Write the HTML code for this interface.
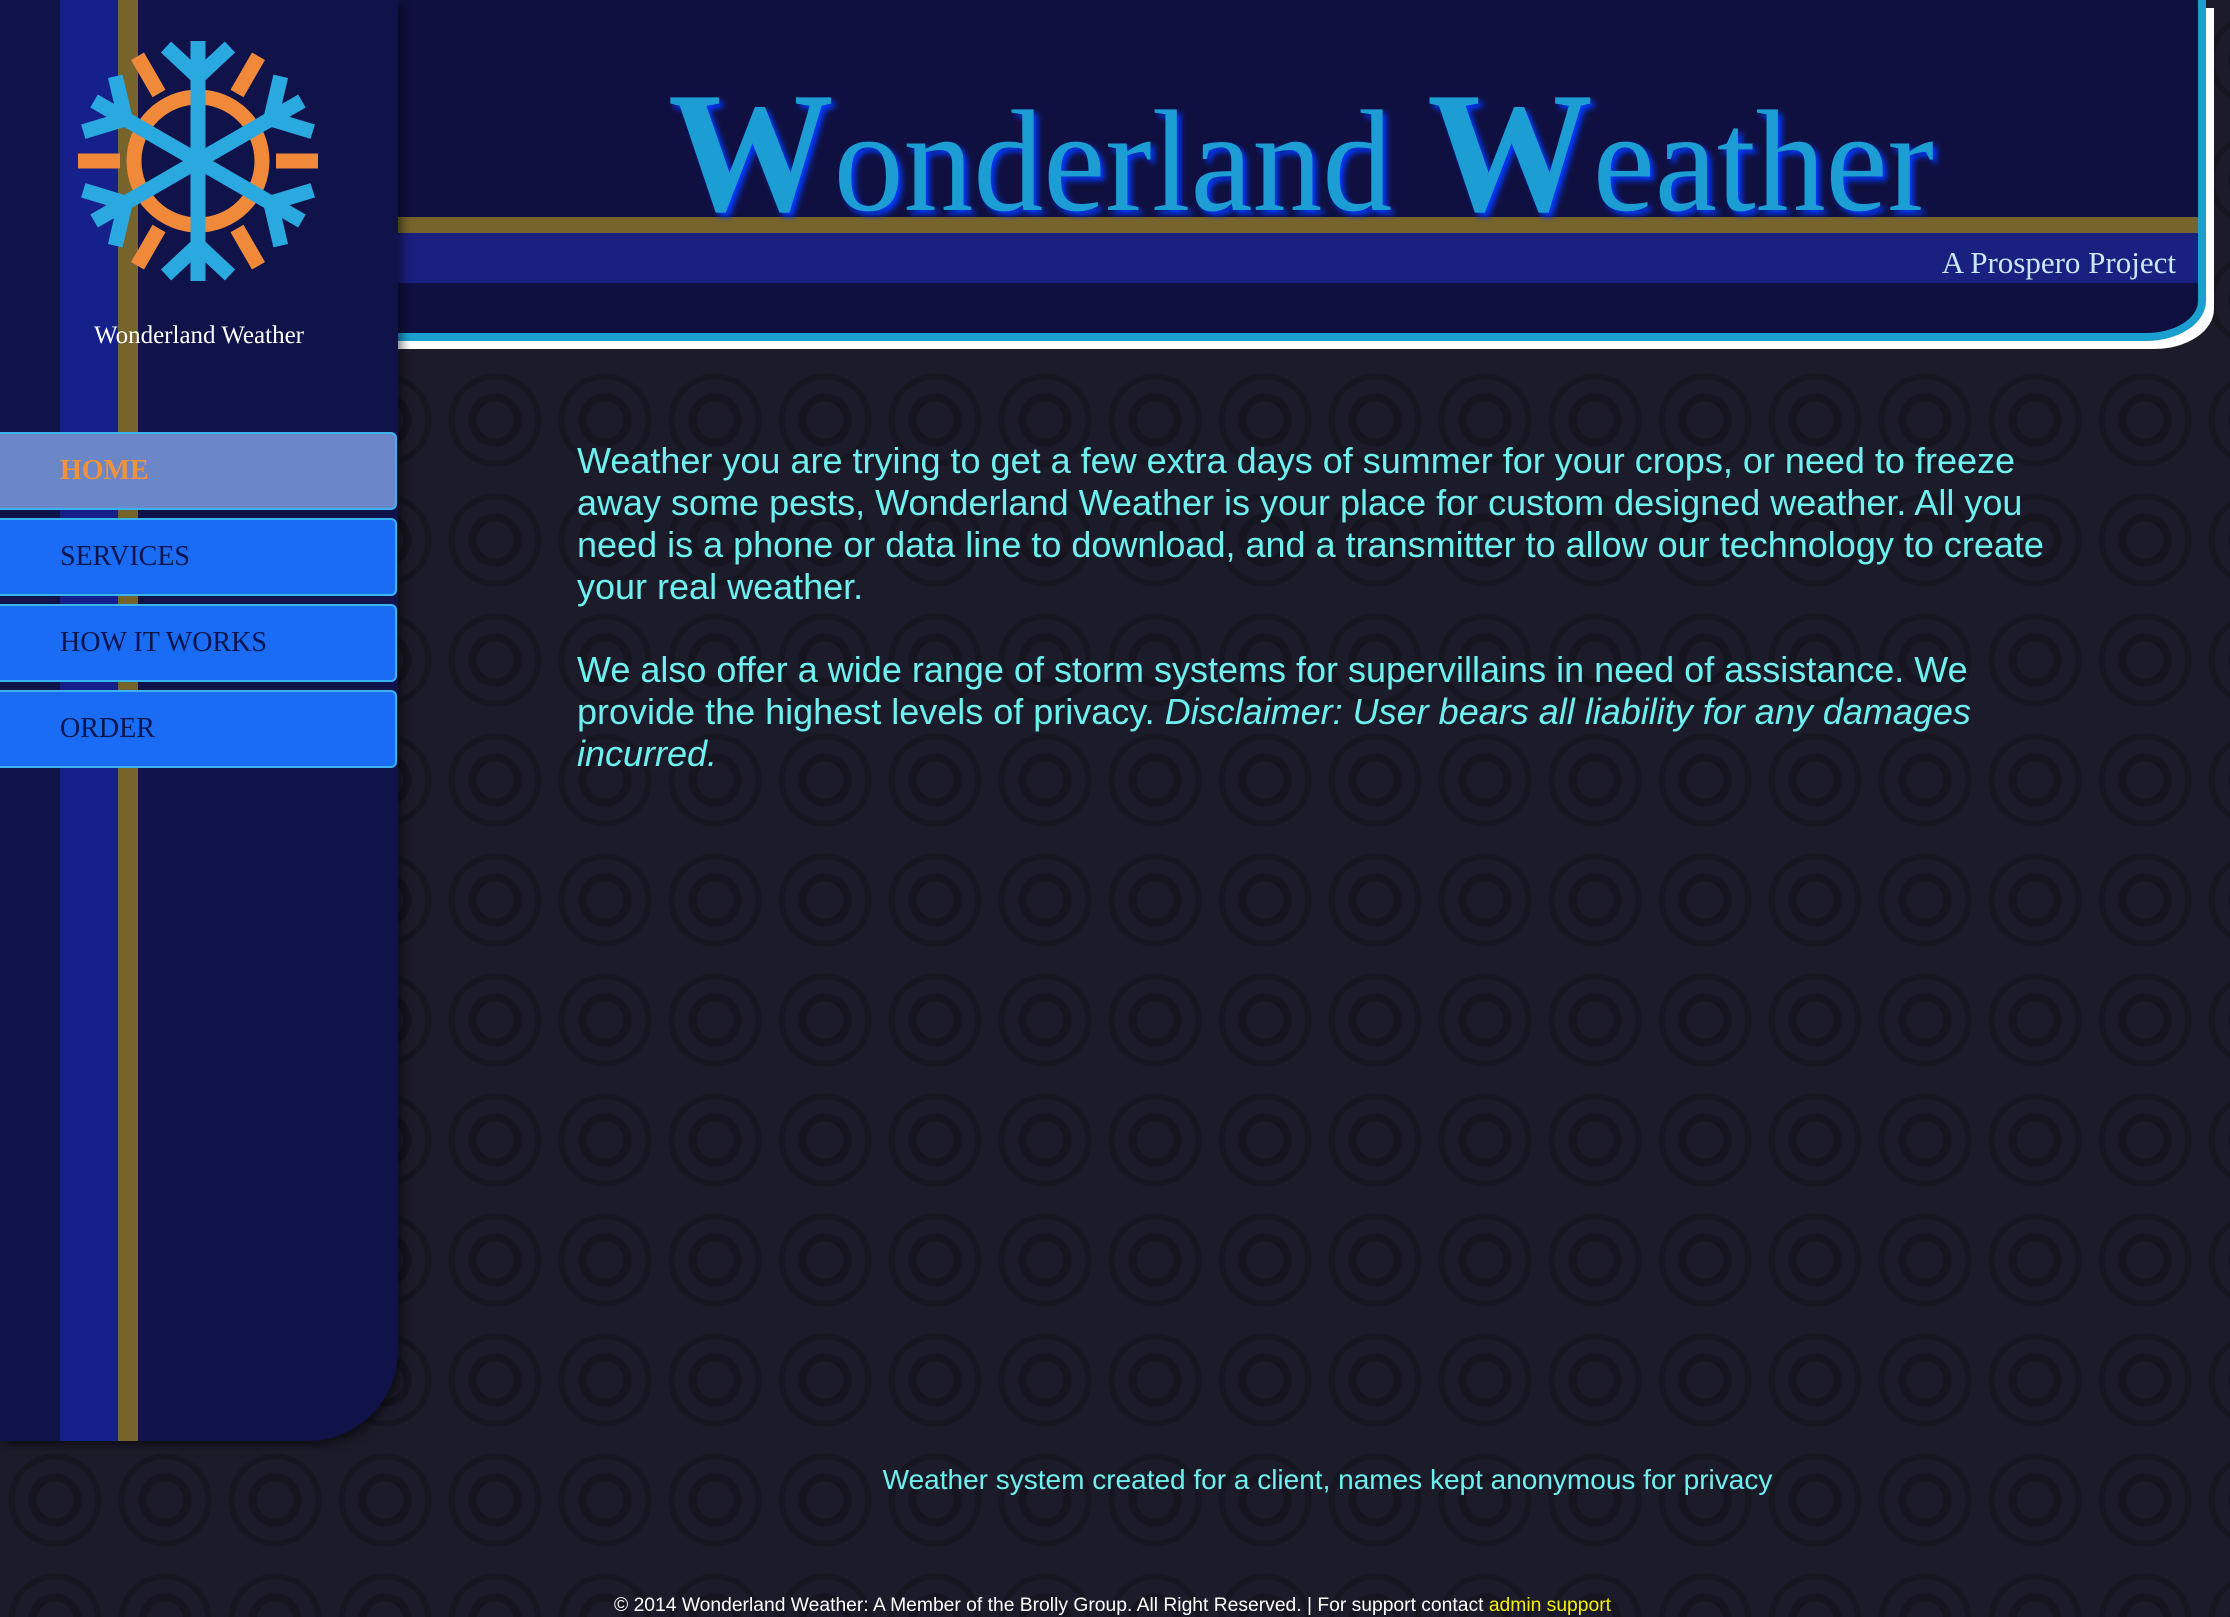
<!DOCTYPE html>
<html><head><meta charset="utf-8">
<style>
html,body{margin:0;padding:0}
body{width:2230px;height:1614px;overflow:hidden;position:relative;
background-color:#1c1b29;
background-image:radial-gradient(circle at 50% 50%, transparent 0 18px, rgba(0,0,0,.25) 19px 26px, transparent 27px 40px, rgba(0,0,0,.2) 41px 46px, transparent 47px);
background-size:110px 120px;
font-family:"Liberation Sans",Arial,sans-serif;}
#side{position:absolute;left:0;top:0;width:398px;height:1441px;background:#10124a;border-bottom-right-radius:90px;overflow:hidden;box-shadow:4px 4px 10px rgba(0,0,0,.5)}
#stripe{position:absolute;left:60px;top:0;width:58px;height:100%;background:#16208a}
#gold{position:absolute;left:118px;top:0;width:20px;height:100%;background:#76642c}
#logo{position:absolute;left:78px;top:41px}
#cap{position:absolute;left:0;width:398px;top:322px;text-align:center;color:#fff;font:25px "Liberation Serif",serif}
.nav{position:absolute;left:0;border:2px solid #3ab4f0;border-left:none;border-radius:0 6px 6px 0;background:#1a6cf5;color:#0a1550;font:28px "Liberation Serif",serif;line-height:74px;padding-left:60px;box-sizing:border-box;width:397px;height:78px}
#head{position:absolute;left:390px;top:0;width:1808px;height:333px;background:#0f1040;border-right:8px solid #1aa0d0;border-bottom:8px solid #1aa0d0;border-bottom-right-radius:60px 40px;box-shadow:8px 8px 0 #fff}
#hg{position:absolute;left:0;top:217px;width:100%;height:16px;background:#76642c}
#hb{position:absolute;left:0;top:233px;width:100%;height:50px;background:#1a2080}
#pp{position:absolute;right:22px;top:245px;color:#c8e8f8;font:31px "Liberation Serif",serif}
#title{position:absolute;left:0;top:0}
#main{position:absolute;left:577px;top:440px;width:1480px;color:#6ef0f0;font-size:36px;line-height:42px}
#main p{margin:0 0 41px}
#fc{position:absolute;top:1464px;color:#6ef0f0;font-size:28px;text-align:center}
#copy{position:absolute;left:614px;top:1595px;color:#fff;font-size:19.3px;white-space:nowrap}
#copy span{color:#f4f000}
</style></head><body>
<div id="head">
<div id="hg"></div><div id="hb"></div>
<svg id="title" width="1808" height="240">
<defs><filter id="gl"><feDropShadow dx="4" dy="4" stdDeviation="3" flood-color="#0038ff"/></filter></defs>
<text x="278" y="210" textLength="1266" lengthAdjust="spacingAndGlyphs" font-family="Liberation Serif,serif" font-size="145" fill="#1a9ed4" filter="url(#gl)"><tspan font-size="172" font-weight="bold">W</tspan>onderland <tspan font-size="172" font-weight="bold">W</tspan>eather</text>
</svg>
<div id="pp">A Prospero Project</div>
</div>
<div id="side">
<div id="stripe"></div><div id="gold"></div>
<svg id="logo" width="240" height="240" viewBox="-120 -120 240 240">
<g stroke="#f08a3a" stroke-width="15" fill="none">
<circle r="64"/>
<g id="d"><line x1="78" y1="0" x2="121" y2="0"/></g>
<use href="#d" transform="rotate(180)"/>
<use href="#d" transform="rotate(60)"/>
<use href="#d" transform="rotate(120)"/>
<use href="#d" transform="rotate(240)"/>
<use href="#d" transform="rotate(300)"/>
</g>
<g stroke="#2aa8e0" stroke-width="15" fill="none">
<g id="a"><line x1="0" y1="0" x2="0" y2="-120"/><polyline points="-32,-114 0,-84 32,-114"/></g>
<use href="#a" transform="rotate(60)"/>
<use href="#a" transform="rotate(120)"/>
<use href="#a" transform="rotate(180)"/>
<use href="#a" transform="rotate(240)"/>
<use href="#a" transform="rotate(300)"/>
</g>
</svg>
<div id="cap">Wonderland Weather</div>
<div class="nav" style="top:432px;background:#6b87c8;color:#f0923a;font-weight:bold">HOME</div>
<div class="nav" style="top:518px">SERVICES</div>
<div class="nav" style="top:604px">HOW IT WORKS</div>
<div class="nav" style="top:690px">ORDER</div>
</div>
<div id="main">
<p>Weather you are trying to get a few extra days of summer for your crops, or need to freeze away some pests, Wonderland Weather is your place for custom designed weather. All you need is a phone or data line to download, and a transmitter to allow our technology to create your real weather.</p>
<p>We also offer a wide range of storm systems for supervillains in need of assistance. We provide the highest levels of privacy. <i>Disclaimer: User bears all liability for any damages incurred.</i></p>
</div>
<div id="fc" style="left:300px;width:2055px">Weather system created for a client, names kept anonymous for privacy</div>
<div id="copy">© 2014 Wonderland Weather: A Member of the Brolly Group. All Right Reserved. | For support contact <span>admin support</span></div>
</body></html>
